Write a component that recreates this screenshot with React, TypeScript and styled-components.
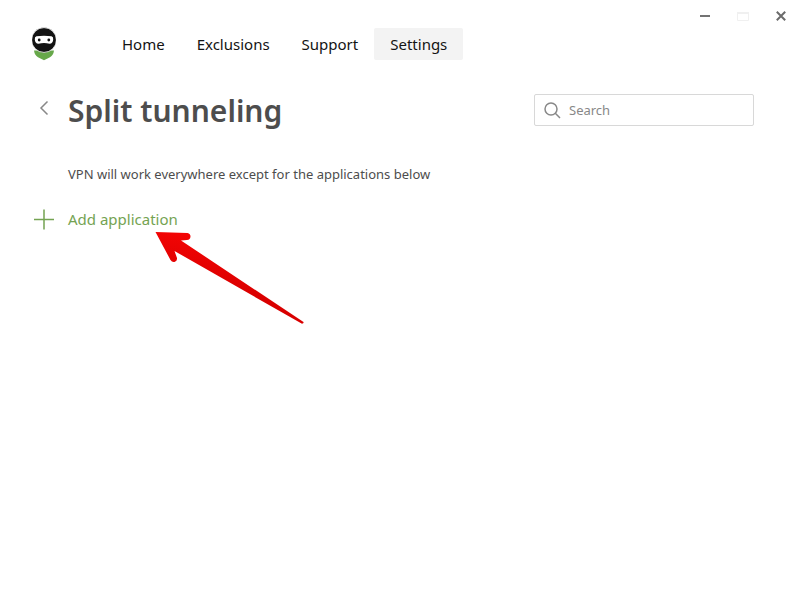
import React from 'react';
import styled, { createGlobalStyle } from 'styled-components';

const GlobalStyle = createGlobalStyle`
  * { box-sizing: border-box; }
  body {
    margin: 0;
    background: #fff;
    color: #4d4d4d;
    font-family: "Noto Sans", "Open Sans", sans-serif;
  }
  button, input { font: inherit; }
`;

const Window = styled.div`
  min-height: 100vh;
  background: #fff;
`;

const Header = styled.header`
  display: flex;
  align-items: flex-start;
  padding-left: 32px;
`;

const Logo = styled.svg`
  flex: none;
  width: 24px;
  height: 34px;
  margin: 27px 50px 0 0;
`;

const Nav = styled.nav`
  display: flex;
  margin-top: 28px;
`;

const NavLink = styled.a<{ $active?: boolean }>`
  height: 32px;
  padding: 0 16px;
  border-radius: 2px;
  background: ${(p) => (p.$active ? '#f3f3f3' : 'transparent')};
  color: #131313;
  font-size: 15px;
  line-height: 32px;
  text-decoration: none;
  white-space: nowrap;
`;

const WindowControls = styled.div`
  display: flex;
  margin-left: auto;
`;

const BareButton = styled.button`
  display: flex;
  align-items: center;
  justify-content: center;
  padding: 0;
  border: 0;
  background: none;
  cursor: pointer;
`;

const ControlButton = styled(BareButton)`
  width: 38px;
  height: 32px;
`;

const Main = styled.main`
  padding: 28px 46px 0 32px;
`;

const TitleRow = styled.div`
  display: flex;
  align-items: center;
  min-height: 44px;
`;

const BackButton = styled(BareButton)`
  flex: none;
  width: 24px;
  height: 32px;
  margin: 0 12px 6px 0;
`;

const Title = styled.h1`
  margin: 0;
  font-size: 30px;
  font-weight: 600;
  line-height: 44px;
`;

const SearchBox = styled.label`
  display: flex;
  align-items: center;
  gap: 8px;
  width: 220px;
  height: 32px;
  margin: 0 0 2px auto;
  padding: 0 9px;
  border: 1px solid #d8d8d8;
  border-radius: 2px;
`;

const SearchInput = styled.input`
  flex: 1;
  min-width: 0;
  padding: 0;
  border: 0;
  outline: 0;
  background: none;
  color: #4d4d4d;
  font-size: 13px;
  &::placeholder { color: #888; opacity: 1; }
`;

const Description = styled.p`
  margin: 31px 0 23px 36px;
  font-size: 13px;
  line-height: 20px;
`;

const AddButton = styled(BareButton)`
  position: relative;
  gap: 12px;
  height: 24px;
  color: #74a352;
  font-size: 15px;
  line-height: 24px;
`;

const Pointer = styled.svg`
  position: absolute;
  top: 18px;
  left: 118px;
  width: 160px;
  height: 105px;
  pointer-events: none;
`;

const links = ['Home', 'Exclusions', 'Support', 'Settings'];

export default function App() {
  return (
    <Window>
      <GlobalStyle />
      <Header>
        <Logo viewBox="0 0 24 34" aria-hidden="true">
          <path d="M2 23.5H22Q21.5 28 18 30.2Q15 31.5 12 33.2Q9 31.5 6 30.2Q2.5 28 2 23.5Z" fill="#67a84a" />
          <circle cx="12" cy="13" r="12.4" fill="#131313" stroke="#fff" strokeWidth="0.8" />
          <path d="M4.5 9.3Q12 8 19.5 9.3Q21.5 9.8 21.2 12.5Q21 16.6 17.5 16.8Q12 15.4 6.5 16.8Q3 16.6 2.8 12.5Q2.5 9.8 4.5 9.3Z" fill="#fff" />
          <circle cx="7.2" cy="13" r="1.4" fill="#131313" />
          <circle cx="16.8" cy="13" r="1.4" fill="#131313" />
        </Logo>
        <Nav>
          {links.map((name) => (
            <NavLink
              key={name}
              href={`#${name.toLowerCase()}`}
              $active={name === 'Settings'}
              aria-current={name === 'Settings' ? 'page' : undefined}
            >
              {name}
            </NavLink>
          ))}
        </Nav>
        <WindowControls>
          <ControlButton aria-label="Minimize">
            <svg width="12" height="12"><path d="M1 6H11" stroke="#737373" strokeWidth="2" /></svg>
          </ControlButton>
          <ControlButton aria-label="Maximize" disabled>
            <svg width="12" height="12"><path d="M.5 2.5H11.5V10.5H.5Z" fill="none" stroke="#f0f0f0" /><path d="M0 3H12" stroke="#f0f0f0" strokeWidth="2" /></svg>
          </ControlButton>
          <ControlButton aria-label="Close">
            <svg width="12" height="12"><path d="M1.8 1.8L10.2 10.2M10.2 1.8L1.8 10.2" stroke="#6b6b6b" strokeWidth="2" /></svg>
          </ControlButton>
        </WindowControls>
      </Header>
      <Main>
        <TitleRow>
          <BackButton aria-label="Back">
            <svg width="10" height="16" fill="none"><path d="M8.5 1.5L2 8L8.5 14.5" stroke="#888" strokeWidth="1.5" /></svg>
          </BackButton>
          <Title>Split tunneling</Title>
          <SearchBox>
            <svg width="17" height="17" fill="none" stroke="#888" strokeWidth="1.5" aria-hidden="true">
              <circle cx="7" cy="7" r="6" />
              <path d="M11.3 11.3L16 16" />
            </svg>
            <SearchInput type="text" placeholder="Search" aria-label="Search" />
          </SearchBox>
        </TitleRow>
        <Description>VPN will work everywhere except for the applications below</Description>
        <AddButton>
          <svg width="24" height="24" aria-hidden="true"><path d="M2 12.5H22M12 2.5V22.5" stroke="#74a352" strokeWidth="1.5" /></svg>
          Add application
          <Pointer viewBox="0 0 160 105" aria-hidden="true">
            <defs>
              <linearGradient id="arrowRed" x1="0.5" y1="0" x2="0.3" y2="0.6">
                <stop offset="0" stopColor="#f90505" />
                <stop offset="1" stopColor="#d90000" />
              </linearGradient>
            </defs>
            <path d="M5.5 7L37.5 8Q40.5 8.5 40.5 11.5Q40.3 14.7 37 15L31 15.5L153.5 97Q154 98.5 152 98.8L24.5 26L27 33Q27.5 36 24.5 37Q22 37.5 20.5 35Z" fill="url(#arrowRed)" />
          </Pointer>
        </AddButton>
      </Main>
    </Window>
  );
}
